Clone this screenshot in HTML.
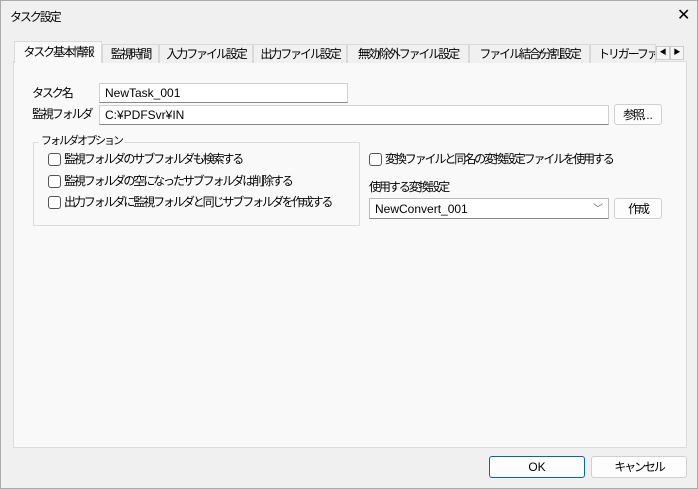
<!DOCTYPE html>
<html><head><meta charset="utf-8"><style>
*{box-sizing:border-box;margin:0;padding:0}
body{width:698px;height:489px;background:#f0f0f0;font-family:"Liberation Sans","Noto Sans CJK JP",sans-serif;font-size:12px;color:#000;position:relative;overflow:hidden;border:1px solid #aaa}
.a{position:absolute;white-space:nowrap}
.j{letter-spacing:-2.1px;line-height:13px}
.tab{position:absolute;top:43px;height:19px;border:1px solid #d9d9d9;border-bottom:none;background:#f0f0f0;padding:2px 0 0 0;text-align:center;font-size:12px;white-space:nowrap;overflow:hidden;letter-spacing:-2.1px;line-height:13px}
.inp{position:absolute;background:#fff;border:1px solid #d0d0d0;border-bottom:1px solid #888;height:20px;padding:2px 0 0 5px;font-size:12px;white-space:nowrap}
.btn{position:absolute;background:#fdfdfd;border:1px solid #d0d0d0;border-radius:3px;text-align:center;font-size:12px;white-space:nowrap}
.cb{position:absolute;width:13px;height:13px;border:1px solid #555;border-radius:3px;background:#fff}
</style></head><body>
<div class="a j" style="left:9px;top:10px">タスク設定</div>
<div class="a" style="left:676px;top:4px;font-size:16px">✕</div>
<div class="a" style="left:12px;top:60px;width:674px;height:387px;background:#f9f9f9;border:1px solid #dcdcdc"></div>
<div class="tab" style="left:13px;top:40px;height:22px;width:88px;background:#f9f9f9;padding-top:4px">タスク基本情報</div>
<div class="tab" style="left:101px;width:57px;padding-top:3px">監視時間</div>
<div class="tab" style="left:158px;width:94px;padding-top:3px">入力ファイル設定</div>
<div class="tab" style="left:252px;width:94px;padding-top:3px">出力ファイル設定</div>
<div class="tab" style="left:346px;width:122px;padding-top:3px">無効/除外ファイル設定</div>
<div class="tab" style="left:468px;width:121px;padding-top:3px">ファイル結合/分割設定</div>
<div class="tab" style="left:589px;width:66px;text-align:left;padding-left:7px;padding-top:3px">トリガーファイル</div>
<div class="a" style="left:655px;top:45px;width:14px;height:14px;border:1px solid #ccc;background:#f6f6f6;font-size:7px;text-align:center;line-height:12px">◀</div>
<div class="a" style="left:669px;top:45px;width:14px;height:14px;border:1px solid #ccc;background:#f6f6f6;font-size:7px;text-align:center;line-height:12px">▶</div>
<div class="a j" style="left:31px;top:86px">タスク名</div>
<div class="inp" style="left:98px;top:82px;width:249px">NewTask_001</div>
<div class="a j" style="left:31px;top:107px">監視フォルダ</div>
<div class="inp" style="left:98px;top:104px;width:510px">C:¥PDFSvr¥IN</div>
<div class="btn" style="left:613px;top:103px;width:48px;height:21px;padding-top:3px"><span class="j">参照</span>...</div>
<div class="a" style="left:32px;top:141px;width:327px;height:84px;border:1px solid #dcdcdc"></div>
<div class="a" style="left:38px;top:134px;background:#f9f9f9;padding:0 2px;font-size:11px;letter-spacing:-2px;line-height:12px">フォルダオプション</div>
<div class="cb" style="left:47px;top:152px"></div><div class="a j" style="left:63px;top:152px">監視フォルダのサブフォルダも検索する</div>
<div class="cb" style="left:47px;top:174px"></div><div class="a j" style="left:63px;top:174px">監視フォルダの空になったサブフォルダは削除する</div>
<div class="cb" style="left:47px;top:195px"></div><div class="a j" style="left:63px;top:195px">出力フォルダに監視フォルダと同じサブフォルダを作成する</div>
<div class="cb" style="left:368px;top:152px"></div><div class="a j" style="left:384px;top:152px">変換ファイルと同名の変換設定ファイルを使用する</div>
<div class="a j" style="left:368px;top:180px">使用する変換設定</div>
<div class="inp" style="left:368px;top:197px;width:240px;height:21px;border:1px solid #bbb;border-bottom:1px solid #888;padding-top:3px">NewConvert_001<span style="position:absolute;right:5px;top:1px;color:#666;font-size:10px">﹀</span></div>
<div class="btn j" style="left:613px;top:197px;width:48px;height:21px;padding-top:4px">作成</div>
<div class="btn" style="left:488px;top:455px;width:96px;height:22px;border:1px solid #0067c0;padding-top:3px">OK</div>
<div class="btn j" style="left:590px;top:455px;width:96px;height:22px;padding-top:4px">キャンセル</div>
</body></html>
